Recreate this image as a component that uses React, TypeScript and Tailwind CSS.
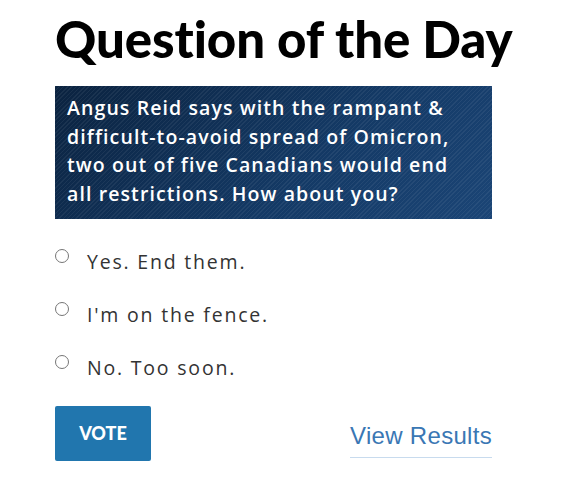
export default function App() {
  const options = ['Yes. End them.', "I'm on the fence.", 'No. Too soon.'];

  return (
    <div className="min-h-[487px] w-[586px] bg-white font-['Open_Sans',sans-serif]">
      <div className="pl-[55px] pr-[94px] pt-[12px]">
        <h1 className="whitespace-nowrap font-['Lato',sans-serif] text-[51px] leading-[54px] font-black tracking-[-0.1px] text-black">
          Question of the Day
        </h1>

        <div className="mt-[20px] h-[133px] bg-[repeating-linear-gradient(135deg,rgba(255,255,255,0.06)_0px,rgba(255,255,255,0.06)_1px,transparent_1px,transparent_3px),linear-gradient(135deg,#0b2340,#143a66_60%,#1b4576)] px-[12px] pt-[8px]">
          <p className="text-[19.5px] leading-[28.5px] font-semibold tracking-[1.1px] text-white">
            Angus Reid says with the rampant &amp;
            <br />
            difficult-to-avoid spread of Omicron,
            <br />
            two out of five Canadians would end
            <br />
            all restrictions. How about you?
          </p>
        </div>

        <div className="mt-[28px] flex flex-col gap-[26px]">
          {options.map((o) => (
            <label key={o} className="flex items-start">
              <span className="mt-[2px] h-[14px] w-[14px] shrink-0 rounded-full border border-[#767676] bg-white" />
              <span className="ml-[18px] mt-[2px] text-[19.5px] leading-[25px] tracking-[1.8px] text-[#333]">{o}</span>
            </label>
          ))}
        </div>

        <div className="mt-[26px] flex items-start justify-between">
          <button className="h-[55px] w-[96px] rounded-[2px] bg-[#2176ae] font-['Lato',sans-serif] text-[18px] font-black text-white">
            VOTE
          </button>
          <a className="mt-[15px] border-b border-[#c8dbee] pb-[6px] font-['Liberation_Sans',sans-serif] text-[24px] leading-[30px] tracking-[0.3px] text-[#3a77b4]">
            View Results
          </a>
        </div>
      </div>
    </div>
  );
}
